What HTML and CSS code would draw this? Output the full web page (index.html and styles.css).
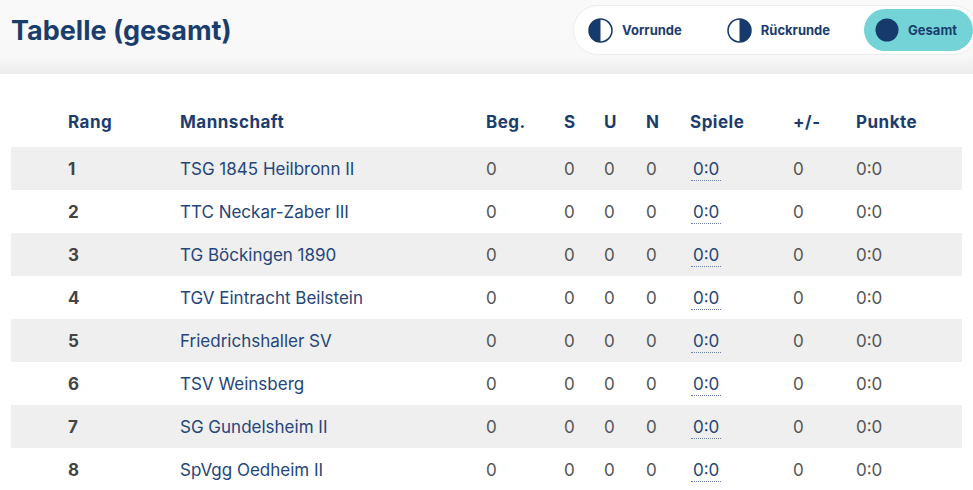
FILE: index.html
```html
<!DOCTYPE html>
<html lang="de">
<head>
<meta charset="utf-8">
<title>Tabelle (gesamt)</title>
<link rel="stylesheet" href="styles.css">
</head>
<body>
<header class="topbar">
  <h1 class="title">Tabelle (gesamt)</h1>
  <nav class="toggle">
    <button class="tbtn">
      <svg class="ico" viewBox="0 0 24 24"><circle cx="12" cy="12" r="11" fill="#fff" stroke="#163a6c" stroke-width="1.5"/><path d="M12 1 A11 11 0 0 0 12 23 Z" fill="#163a6c"/></svg>
      <span>Vorrunde</span>
    </button>
    <button class="tbtn">
      <svg class="ico" viewBox="0 0 24 24"><circle cx="12" cy="12" r="11" fill="#fff" stroke="#163a6c" stroke-width="1.5"/><path d="M12 1 A11 11 0 0 1 12 23 Z" fill="#163a6c"/></svg>
      <span>Rückrunde</span>
    </button>
    <button class="tbtn active">
      <svg class="ico" viewBox="0 0 24 24"><circle cx="12" cy="12" r="11.5" fill="#163a6c"/></svg>
      <span>Gesamt</span>
    </button>
  </nav>
</header>

<main class="table">
  <div class="row head">
    <div>Rang</div><div>Mannschaft</div><div>Beg.</div><div>S</div><div>U</div><div>N</div><div>Spiele</div><div>+/-</div><div>Punkte</div>
  </div>
  <div class="row odd"><div class="rank">1</div><div class="team">TSG 1845 Heilbronn II</div><div>0</div><div>0</div><div>0</div><div>0</div><div><span class="games">0:0</span></div><div>0</div><div>0:0</div></div>
  <div class="row"><div class="rank">2</div><div class="team">TTC Neckar-Zaber III</div><div>0</div><div>0</div><div>0</div><div>0</div><div><span class="games">0:0</span></div><div>0</div><div>0:0</div></div>
  <div class="row odd"><div class="rank">3</div><div class="team">TG Böckingen 1890</div><div>0</div><div>0</div><div>0</div><div>0</div><div><span class="games">0:0</span></div><div>0</div><div>0:0</div></div>
  <div class="row"><div class="rank">4</div><div class="team">TGV Eintracht Beilstein</div><div>0</div><div>0</div><div>0</div><div>0</div><div><span class="games">0:0</span></div><div>0</div><div>0:0</div></div>
  <div class="row odd"><div class="rank">5</div><div class="team">Friedrichshaller SV</div><div>0</div><div>0</div><div>0</div><div>0</div><div><span class="games">0:0</span></div><div>0</div><div>0:0</div></div>
  <div class="row"><div class="rank">6</div><div class="team">TSV Weinsberg</div><div>0</div><div>0</div><div>0</div><div>0</div><div><span class="games">0:0</span></div><div>0</div><div>0:0</div></div>
  <div class="row odd"><div class="rank">7</div><div class="team">SG Gundelsheim II</div><div>0</div><div>0</div><div>0</div><div>0</div><div><span class="games">0:0</span></div><div>0</div><div>0:0</div></div>
  <div class="row"><div class="rank">8</div><div class="team">SpVgg Oedheim II</div><div>0</div><div>0</div><div>0</div><div>0</div><div><span class="games">0:0</span></div><div>0</div><div>0:0</div></div>
</main>
</body>
</html>
```
FILE: styles.css
```css
* { box-sizing: border-box; }
html, body { margin: 0; padding: 0; }
body {
  font-family: Inter, "Noto Sans", "Liberation Sans", sans-serif;
  background: #fff;
  color: #555;
  overflow: hidden;
  width: 973px;
}
.topbar {
  height: 74px;
  display: flex;
  justify-content: space-between;
  align-items: flex-start;
  padding-left: 11px;
  background: linear-gradient(to bottom, #f9f9f9 0, #f8f8f8 55px, #ececec 74px);
}
.title {
  margin: 13px 0 0;
  font-size: 27px;
  font-weight: 700;
  color: #1b3d6e;
  line-height: 35px;
}
.toggle {
  margin-top: 5px;
  margin-right: -5px;
  height: 50px;
  padding: 3px 4px 3px 3px;
  display: flex;
  align-items: center;
  gap: 18px;
  background: #fff;
  border: 1px solid #ececec;
  border-radius: 25px;
}
.tbtn {
  height: 42px;
  display: flex;
  align-items: center;
  gap: 9px;
  padding: 0 16px 0 11px;
  border: 0;
  background: transparent;
  border-radius: 21px;
  font-family: inherit;
  font-size: 13px;
  font-weight: 700;
  color: #1b3d6e;
}
.tbtn.active { background: #73d3d6; }
.ico { width: 25px; height: 25px; display: block; }
.active .ico { width: 24px; height: 24px; }

.table {
  margin: 30px 0 0 11px;
  width: 951px;
}
.row {
  display: grid;
  grid-template-columns: 112px 306px 78px 40px 42px 44px 103px 63px 1fr;
  align-items: center;
  height: 43px;
  padding-left: 57px;
  font-size: 17px;
  color: #555;
}
.row.head {
  padding-bottom: 8px;
  font-weight: 700;
  letter-spacing: 0.5px;
  color: #1b3d6e;
}
.row.odd { background: #efefef; }
.rank { font-weight: 700; color: #444; }
.team { color: #24467a; }
.games {
  display: inline-block;
  vertical-align: middle;
  margin-left: 1px;
  padding: 3px 2px 1px;
  color: #24467a;
  border-bottom: 1px dotted #6a7fa8;
  line-height: 20px;
}
```
